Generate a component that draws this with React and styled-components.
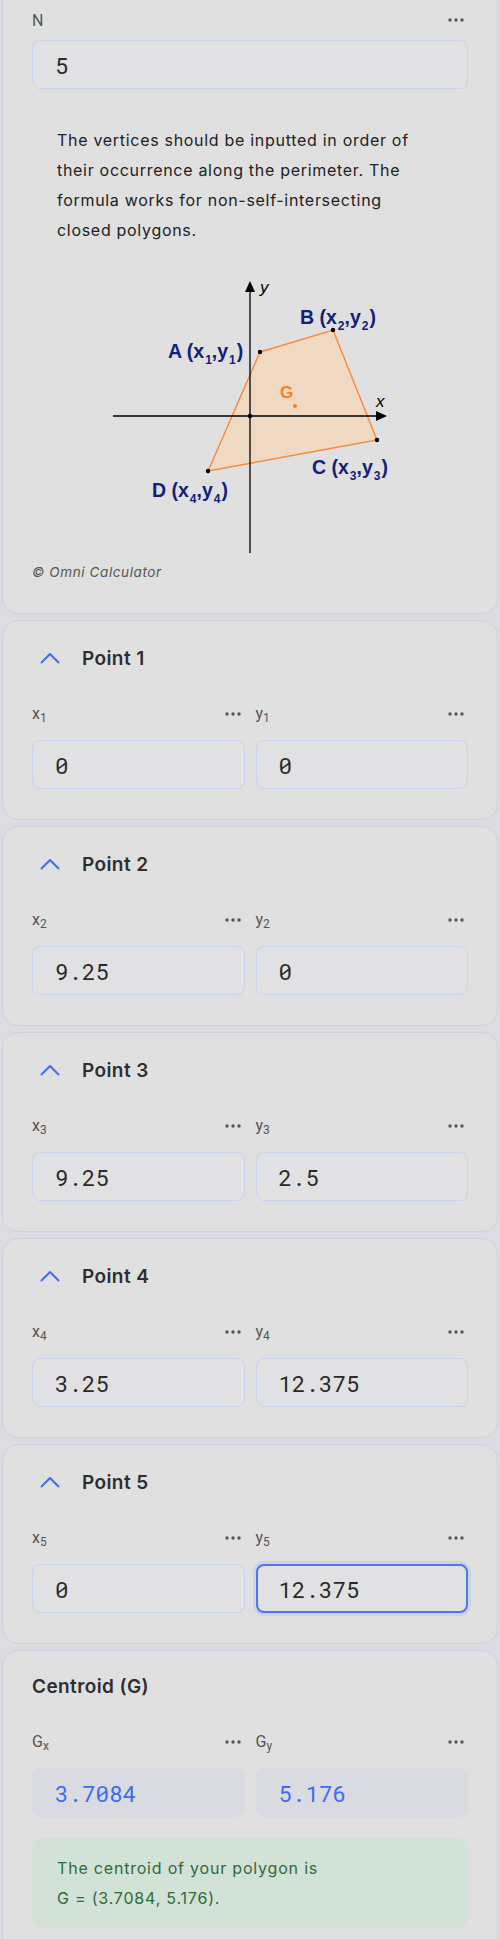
import React from 'react';
import styled, { createGlobalStyle } from 'styled-components';

const Global = createGlobalStyle`
  body {
    margin: 0;
    background: #dcdde3;
    font-family: Inter, "Open Sans", sans-serif;
  }
`;

const Page = styled.div`
  display: flex;
  flex-direction: column;
  gap: 6px;
  padding: 0 2px;
`;

const Card = styled.section`
  background: #e0e0e0;
  border: 1px solid #cfd2da;
  border-radius: ${(p) => (p.$cut ? '0 0 16px 16px' : '16px')};
  border-top: ${(p) => (p.$cut ? 'none' : '1px solid #cfd2da')};
  padding: ${(p) => p.$pad || '23px 29px 30px'};
`;

const LabelRow = styled.div`
  display: flex;
  justify-content: space-between;
  align-items: center;
  height: 24px;
  padding-right: 4px;
  color: #555;
  font-family: Roboto, Inter, sans-serif;
  font-size: 16px;
  sub {
    font-size: 12px;
    vertical-align: -3px;
  }
`;

const Field = styled.div`
  display: flex;
  flex-direction: column;
  gap: 14px;
  flex: 1;
  min-width: 0;
`;

const FieldGrid = styled.div`
  display: grid;
  grid-template-columns: 1fr 1fr;
  gap: 11px;
  margin-top: ${(p) => p.$top || '30px'};
`;

const Input = styled.div`
  height: 49px;
  box-sizing: border-box;
  border-radius: 8px;
  border: ${(p) => (p.$focus ? '2px solid #4a78f2' : '1px solid #c9d3f2')};
  box-shadow: ${(p) => (p.$focus ? '0 0 0 3px rgba(74,120,242,0.12)' : 'none')};
  background: ${(p) => (p.$out ? '#dadbe1' : '#e1e1e3')};
  ${(p) => p.$out && 'border-color: #dadbe1;'}
  display: flex;
  align-items: center;
  padding-left: ${(p) => (p.$focus ? '21px' : '22px')};
  font-family: "Roboto Mono", "DejaVu Sans Mono", "Liberation Mono", monospace;
  font-size: 22.5px;
  color: ${(p) => (p.$out ? '#3d6cf2' : '#2a2a2a')};
`;

const Desc = styled.p`
  margin: 36px 0 0 25px;
  font-size: 16px;
  letter-spacing: 0.7px;
  line-height: 30px;
  color: #222;
`;

const Figure = styled.div`
  display: flex;
  justify-content: center;
  margin-top: 23px;
`;

const Copy = styled.div`
  margin-top: 5px;
  font-size: 13.5px;
  letter-spacing: 0.6px;
  font-style: italic;
  color: #555;
  line-height: 18px;
`;

const Header = styled.div`
  display: flex;
  align-items: center;
  gap: 22px;
  height: 28px;
  padding-left: 8px;
`;

const Title = styled.h3`
  margin: 0;
  font-size: 19px;
  letter-spacing: 0.4px;
  font-weight: 600;
  color: #2e2e2e;
`;

const Note = styled.div`
  margin-top: 21px;
  background: #d3e2d6;
  border-radius: 10px;
  padding: 15px 25px;
  color: #2e6a3c;
  font-size: 16px;
  letter-spacing: 0.8px;
  line-height: 30px;
`;

const Dots = () => (
  <svg width="16" height="4" viewBox="0 0 16 4">
    <circle cx="2" cy="2" r="1.7" fill="#555" />
    <circle cx="8" cy="2" r="1.7" fill="#555" />
    <circle cx="14" cy="2" r="1.7" fill="#555" />
  </svg>
);

const Chevron = () => (
  <svg width="20" height="12" viewBox="0 0 20 12">
    <path d="M1.5 10.5 L10 2 L18.5 10.5" fill="none" stroke="#3f6df5" strokeWidth="2" strokeLinecap="round" strokeLinejoin="round" />
  </svg>
);

const Label = ({ name, sub }) => (
  <LabelRow>
    <span>
      {name}
      {sub && <sub>{sub}</sub>}
    </span>
    <Dots />
  </LabelRow>
);

const Lbl = ({ x, y, main, a, b }) => (
  <text x={x} y={y} fontFamily='"Liberation Sans", Arial, sans-serif' fontWeight="700" fontSize="19.5" fill="#13207a">
    {main} (x
    <tspan fontSize="12" dy="6" dx="1">{a}</tspan>
    <tspan dy="-6">,y</tspan>
    <tspan fontSize="12" dy="6" dx="1">{b}</tspan>
    <tspan dy="-6" dx="1">)</tspan>
  </text>
);

const Diagram = () => (
  <svg width="300" height="290" viewBox="0 0 300 290">
    <polygon points="160,84 233,62 277,172 108,203" fill="#f0d9c3" stroke="#f58a3c" strokeWidth="1.4" />
    <line x1="13" y1="148" x2="278" y2="148" stroke="#000" strokeWidth="1.3" />
    <polygon points="287,148 276,143 276,153" fill="#000" />
    <line x1="150" y1="285" x2="150" y2="22" stroke="#000" strokeWidth="1.3" />
    <polygon points="150,13 145,24 155,24" fill="#000" />
    <circle cx="150" cy="148" r="2.2" fill="#000" />
    <circle cx="160" cy="84" r="2.2" fill="#000" />
    <circle cx="233" cy="62" r="2.2" fill="#000" />
    <circle cx="277" cy="172" r="2.2" fill="#000" />
    <circle cx="108" cy="203" r="2.2" fill="#000" />
    <circle cx="195" cy="138" r="2" fill="#f5821f" />
    <text x="180" y="130" fontFamily='"Liberation Sans", Arial, sans-serif' fontWeight="700" fontSize="17" fill="#f5821f">G</text>
    <text x="276" y="139" fontFamily='"Liberation Sans", Arial, sans-serif' fontStyle="italic" fontSize="17" fill="#000">x</text>
    <text x="160" y="25" fontFamily='"Liberation Sans", Arial, sans-serif' fontStyle="italic" fontSize="17" fill="#000">y</text>
    <Lbl x={68} y={90} main="A" a="1" b="1" />
    <Lbl x={200} y={56} main="B" a="2" b="2" />
    <Lbl x={212} y={206} main="C" a="3" b="3" />
    <Lbl x={52} y={229} main="D" a="4" b="4" />
  </svg>
);

const points = [
  { x: '0', y: '0' },
  { x: '9.25', y: '0' },
  { x: '9.25', y: '2.5' },
  { x: '3.25', y: '12.375' },
  { x: '0', y: '12.375', focus: true },
];

const App = () => (
  <>
    <Global />
    <Page>
      <Card $cut $pad="8px 29px 32px">
        <Field>
          <Label name="N" />
        </Field>
        <div style={{ marginTop: 8 }}>
          <Input>5</Input>
        </div>
        <Desc>
          The vertices should be inputted in order of
          <br />
          their occurrence along the perimeter. The
          <br />
          formula works for non-self-intersecting
          <br />
          closed polygons.
        </Desc>
        <Figure>
          <Diagram />
        </Figure>
        <Copy>© Omni Calculator</Copy>
      </Card>
      {points.map((p, i) => (
        <Card key={i}>
          <Header>
            <Chevron />
            <Title>Point {i + 1}</Title>
          </Header>
          <FieldGrid>
            <Field>
              <Label name="x" sub={i + 1} />
              <Input>{p.x}</Input>
            </Field>
            <Field>
              <Label name="y" sub={i + 1} />
              <Input $focus={p.focus}>{p.y}</Input>
            </Field>
          </FieldGrid>
        </Card>
      ))}
      <Card $pad="24px 29px 40px">
        <Title>Centroid (G)</Title>
        <FieldGrid $top="32px">
          <Field>
            <Label name="G" sub="x" />
            <Input $out>3.7084</Input>
          </Field>
          <Field>
            <Label name="G" sub="y" />
            <Input $out>5.176</Input>
          </Field>
        </FieldGrid>
        <Note>
          The centroid of your polygon is
          <br />G = (3.7084, 5.176).
        </Note>
      </Card>
    </Page>
  </>
);

export default App;
